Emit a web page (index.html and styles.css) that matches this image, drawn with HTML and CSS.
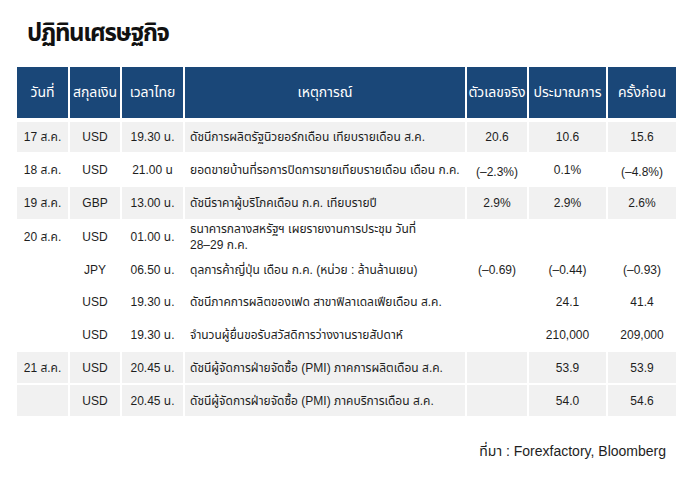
FILE: index.html
```html
<!DOCTYPE html>
<html lang="th">
<head>
<meta charset="utf-8">
<title>ปฏิทินเศรษฐกิจ</title>
<link rel="stylesheet" href="styles.css">
</head>
<body>
<div class="page">
  <h1 class="title">ปฏิทินเศรษฐกิจ</h1>
  <div class="table">
    <div class="row head">
      <div class="c">วันที่</div>
      <div class="c">สกุลเงิน</div>
      <div class="c">เวลาไทย</div>
      <div class="c">เหตุการณ์</div>
      <div class="c">ตัวเลขจริง</div>
      <div class="c">ประมาณการ</div>
      <div class="c">ครั้งก่อน</div>
    </div>
    <div class="row gray h30">
      <div class="c">17 ส.ค.</div>
      <div class="c">USD</div>
      <div class="c">19.30 น.</div>
      <div class="c desc">ดัชนีการผลิตรัฐนิวยอร์กเดือน เทียบรายเดือน ส.ค.</div>
      <div class="c">20.6</div>
      <div class="c">10.6</div>
      <div class="c">15.6</div>
    </div>
    <div class="row h31">
      <div class="c">18 ส.ค.</div>
      <div class="c">USD</div>
      <div class="c">21.00 น</div>
      <div class="c desc">ยอดขายบ้านที่รอการปิดการขายเทียบรายเดือน เดือน ก.ค.</div>
      <div class="c low">(–2.3%)</div>
      <div class="c">0.1%</div>
      <div class="c low">(–4.8%)</div>
    </div>
    <div class="row gray h32">
      <div class="c">19 ส.ค.</div>
      <div class="c">GBP</div>
      <div class="c">13.00 น.</div>
      <div class="c desc">ดัชนีราคาผู้บริโภคเดือน ก.ค. เทียบรายปี</div>
      <div class="c">2.9%</div>
      <div class="c">2.9%</div>
      <div class="c">2.6%</div>
    </div>
    <div class="row h32">
      <div class="c">20 ส.ค.</div>
      <div class="c">USD</div>
      <div class="c">01.00 น.</div>
      <div class="c desc two"><span class="ln">ธนาคารกลางสหรัฐฯ เผยรายงานการประชุม วันที่</span><span class="ln">28–29 ก.ค.</span></div>
      <div class="c"></div>
      <div class="c"></div>
      <div class="c"></div>
    </div>
    <div class="row h30">
      <div class="c"></div>
      <div class="c">JPY</div>
      <div class="c">06.50 น.</div>
      <div class="c desc">ดุลการค้าญี่ปุ่น เดือน ก.ค. (หน่วย : ล้านล้านเยน)</div>
      <div class="c">(–0.69)</div>
      <div class="c">(–0.44)</div>
      <div class="c">(–0.93)</div>
    </div>
    <div class="row h30">
      <div class="c"></div>
      <div class="c">USD</div>
      <div class="c">19.30 น.</div>
      <div class="c desc">ดัชนีภาคการผลิตของเฟด สาขาฟิลาเดลเฟียเดือน ส.ค.</div>
      <div class="c"></div>
      <div class="c">24.1</div>
      <div class="c">41.4</div>
    </div>
    <div class="row h31">
      <div class="c"></div>
      <div class="c">USD</div>
      <div class="c">19.30 น.</div>
      <div class="c desc">จำนวนผู้ยื่นขอรับสวัสดิการว่างงานรายสัปดาห์</div>
      <div class="c"></div>
      <div class="c">210,000</div>
      <div class="c">209,000</div>
    </div>
    <div class="row gray h31">
      <div class="c">21 ส.ค.</div>
      <div class="c">USD</div>
      <div class="c">20.45 น.</div>
      <div class="c desc">ดัชนีผู้จัดการฝ่ายจัดซื้อ (PMI) ภาคการผลิตเดือน ส.ค.</div>
      <div class="c"></div>
      <div class="c">53.9</div>
      <div class="c">53.9</div>
    </div>
    <div class="row gray h31">
      <div class="c"></div>
      <div class="c">USD</div>
      <div class="c">20.45 น.</div>
      <div class="c desc">ดัชนีผู้จัดการฝ่ายจัดซื้อ (PMI) ภาคบริการเดือน ส.ค.</div>
      <div class="c"></div>
      <div class="c">54.0</div>
      <div class="c">54.6</div>
    </div>
  </div>
  <div class="source">ที่มา : Forexfactory, Bloomberg</div>
</div>
</body>
</html>
```

FILE: styles.css
```css
html, body {
  margin: 0;
  padding: 0;
  background: #ffffff;
}
body {
  font-family: "Liberation Sans", "Noto Sans Thai", "Noto Sans", sans-serif;
  color: #1e1e1e;
}
.page {
  width: 695px;
  height: 481px;
  padding: 14px 19px 0 17px;
  box-sizing: border-box;
}
.title {
  margin: 0 0 0 10px;
  font-size: 24px;
  line-height: 38px;
  font-weight: 700;
  letter-spacing: -1.3px;
  color: #111111;
  height: 53px;
}
.table {
  display: flex;
  flex-direction: column;
  gap: 2px;
  width: 659px;
}
.row {
  display: grid;
  grid-template-columns: 51px 50px 61px 280px 60px 77px 68px;
  column-gap: 2px;
  font-size: 12px;
}
.row .c {
  display: flex;
  align-items: center;
  justify-content: center;
  white-space: nowrap;
}
.row .desc {
  justify-content: flex-start;
  padding-left: 5px;
}
.row .two {
  flex-direction: column;
  align-items: flex-start;
  justify-content: center;
}
.ln {
  display: block;
  line-height: 16px;
}
.row .low {
  padding-top: 4px;
}
.head {
  height: 51px;
  margin-bottom: 2px;
  font-size: 14px;
}
.head .c {
  background: #1a4778;
  color: #ffffff;
}
.gray .c {
  background: #f1f1f1;
}
.h30 { height: 30px; }
.h31 { height: 31px; }
.h32 { height: 32px; }
.source {
  width: 659px;
  box-sizing: border-box;
  padding-right: 10px;
  margin-top: 25px;
  text-align: right;
  font-size: 14px;
  color: #1e1e1e;
}
```
